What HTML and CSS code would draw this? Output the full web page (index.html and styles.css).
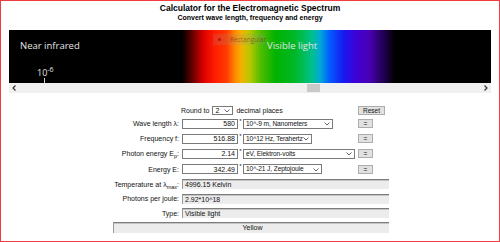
FILE: index.html
```html
<!DOCTYPE html>
<html lang="en">
<head>
  <meta charset="UTF-8" />
  <title>Electromagnetic Spectrum Calculator</title>
  <link rel="stylesheet" href="styles.css">
</head>
<body>
  <div class="page">
    <header class="head">
      <h1 class="title">Calculator for the Electromagnetic Spectrum</h1>
      <h2 class="subtitle">Convert wave length, frequency and energy</h2>
    </header>

    <div class="spectrum">
      <div class="chart">
        <div class="band"></div>
        <div class="legend"><span class="legend-dot"></span><span class="legend-text">Rectangular</span></div>
        <span class="region region-ir">Near infrared</span>
        <span class="region region-vis">Visible light</span>
        <span class="tick">10<sup>-6</sup></span>
        <span class="tick-line"></span>
      </div>
      <div class="scrollbar">
        <span class="arrow"><svg width="4" height="6" viewBox="0 0 4 6"><path d="M3.5 0.5 L1 3 L3.5 5.5" fill="none" stroke="#333" stroke-width="1.2"/></svg></span>
        <div class="track"><div class="thumb"></div></div>
        <span class="arrow"><svg width="4" height="6" viewBox="0 0 4 6"><path d="M0.5 0.5 L3 3 L0.5 5.5" fill="none" stroke="#333" stroke-width="1.2"/></svg></span>
      </div>
    </div>

    <div class="calc">
      <div class="round">
        Round to
        <span class="select select-round">2<svg class="chev" width="6" height="4" viewBox="0 0 6 4"><path d="M0.5 0.5 L3 3 L5.5 0.5" fill="none" stroke="#555" stroke-width="0.9"/></svg></span>
        decimal places
      </div>
      <span class="btn btn-reset">Reset</span>

      <span class="label">Wave length λ:</span>
      <input class="num" type="text" value="580" />
      <span class="star">*</span>
      <span class="select" style="width: 90px">10^-9 m, Nanometers<svg class="chev" width="6" height="4" viewBox="0 0 6 4"><path d="M0.5 0.5 L3 3 L5.5 0.5" fill="none" stroke="#555" stroke-width="0.9"/></svg></span>
      <span class="btn btn-eq">=</span>

      <span class="label">Frequency f:</span>
      <input class="num" type="text" value="516.88" />
      <span class="star">*</span>
      <span class="select" style="width: 69px">10^12 Hz, Terahertz<svg class="chev" width="6" height="4" viewBox="0 0 6 4"><path d="M0.5 0.5 L3 3 L5.5 0.5" fill="none" stroke="#555" stroke-width="0.9"/></svg></span>
      <span class="btn btn-eq">=</span>

      <span class="label">Photon energy E<sub>p</sub>:</span>
      <input class="num" type="text" value="2.14" />
      <span class="star">*</span>
      <span class="select" style="width: 112px">eV, Elektron-volts<svg class="chev" width="6" height="4" viewBox="0 0 6 4"><path d="M0.5 0.5 L3 3 L5.5 0.5" fill="none" stroke="#555" stroke-width="0.9"/></svg></span>
      <span class="btn btn-eq">=</span>

      <span class="label">Energy E:</span>
      <input class="num" type="text" value="342.49" />
      <span class="star">*</span>
      <span class="select" style="width: 79px">10^-21 J, Zeptojoule<svg class="chev" width="6" height="4" viewBox="0 0 6 4"><path d="M0.5 0.5 L3 3 L5.5 0.5" fill="none" stroke="#555" stroke-width="0.9"/></svg></span>
      <span class="btn btn-eq">=</span>

      <span class="label">Temperature at λ<sub>max</sub>:</span>
      <div class="out">4996.15 Kelvin</div>

      <span class="label">Photons per joule:</span>
      <div class="out">2.92*10^18</div>

      <span class="label">Type:</span>
      <div class="out">Visible light</div>

      <div class="out out-color">Yellow</div>
    </div>
  </div>
</body>
</html>
```

FILE: styles.css
```css
* {
  box-sizing: border-box;
}
body {
  margin: 0;
  font-family: 'Liberation Sans', Arial, sans-serif;
  background: #ffffff;
  color: #000000;
}
.page {
  width: 500px;
  height: 242px;
  border: 1px solid #f03c3c;
  overflow: hidden;
}
.head {
  padding-top: 2px;
  text-align: center;
}
.title {
  margin: 0;
  font-size: 8.5px;
  line-height: 11px;
  font-weight: bold;
}
.subtitle {
  margin: 0;
  font-size: 7px;
  line-height: 7px;
  font-weight: bold;
}
.spectrum {
  margin: 9px 8px 0 8px;
}
.chart {
  position: relative;
  height: 53px;
  background: #000000;
  overflow: hidden;
  font-family: 'Open Sans', sans-serif;
}
.band {
  position: absolute;
  left: 173px;
  top: 0;
  width: 213px;
  height: 100%;
  background: linear-gradient(to right,
    #000000 0%,
    #6a0000 5%,
    #d80000 10%,
    #ff1a00 15%,
    #ff3c00 21%,
    #ff8a00 25%,
    #f2b400 28%,
    #b4c800 32%,
    #50bd00 37%,
    #00b200 44%,
    #00b828 53%,
    #00c08c 61%,
    #00a8d8 65%,
    #0060ff 69%,
    #1818f0 76%,
    #4000d4 82%,
    #4a00b4 88%,
    #24005a 94%,
    #000000 100%);
}
.legend {
  position: absolute;
  left: 204px;
  top: 4px;
  width: 52px;
  height: 11px;
  background: rgba(150, 150, 150, 0.18);
  font-size: 6.5px;
  line-height: 11px;
  padding-left: 17px;
  white-space: nowrap;
}
.legend-text {
  color: rgba(110, 20, 20, 0.55);
}
.legend-dot {
  position: absolute;
  left: 5px;
  top: 4px;
  width: 3px;
  height: 3px;
  border-radius: 50%;
  background: rgba(140, 0, 0, 0.6);
}
.region {
  position: absolute;
  top: 11px;
  font-size: 9.5px;
  line-height: 10px;
  color: #e4e4e4;
  white-space: nowrap;
}
.region-ir {
  left: 11px;
}
.region-vis {
  left: 258px;
}
.tick {
  position: absolute;
  left: 28px;
  top: 38px;
  font-size: 9px;
  line-height: 10px;
  color: #e4e4e4;
}
.tick sup {
  font-size: 7px;
  vertical-align: 4px;
  line-height: 0;
}
.tick-line {
  position: absolute;
  left: 35px;
  top: 48px;
  width: 1px;
  height: 5px;
  background: #cccccc;
}
.scrollbar {
  display: flex;
  align-items: center;
  height: 10px;
  background: #f0f0f0;
}
.arrow {
  width: 10px;
  height: 10px;
  display: flex;
  align-items: center;
  justify-content: center;
}
.track {
  flex: 1;
  height: 10px;
  padding-top: 1px;
}
.thumb {
  margin-left: 288px;
  width: 13px;
  height: 8px;
  background: #c9c9c9;
}
.calc {
  display: grid;
  grid-template-columns: 69px 56px 5px 115px 31px;
  grid-template-rows: 12px 15px 15px 15px 16px 14.5px 14.5px 14.5px 14.5px;
  align-items: center;
  width: 276px;
  margin: 11px 0 0 112px;
  font-size: 7px;
  color: #111111;
}
.round {
  grid-column: 2 / 5;
  display: flex;
  align-items: center;
  gap: 3px;
  margin-left: -1px;
  white-space: nowrap;
}
.label {
  grid-column: 1;
  text-align: right;
  padding-right: 3px;
  white-space: nowrap;
}
.label sub {
  font-size: 5.5px;
  line-height: 0;
}
.num {
  width: 56px;
  height: 10px;
  margin: 0;
  padding: 0 2px;
  border: 1px solid #7a7a7a;
  background: #ffffff;
  font-family: 'Liberation Sans', Arial, sans-serif;
  font-size: 7px;
  color: #111111;
  text-align: right;
}
.star {
  text-align: center;
  font-size: 6px;
  align-self: start;
  padding-top: 2px;
}
.select {
  position: relative;
  display: block;
  height: 10px;
  padding: 0 6px 0 2px;
  border: 1px solid #7a7a7a;
  background: #ffffff;
  font-size: 6.6px;
  letter-spacing: -0.1px;
  line-height: 8px;
  white-space: nowrap;
  overflow: hidden;
}
.select-round {
  width: 21px;
  height: 9px;
  line-height: 7px;
  font-size: 7px;
}
.chev {
  position: absolute;
  right: 2px;
  top: 2.5px;
}
.btn {
  display: block;
  height: 9px;
  border: 1px solid #adadad;
  background: #e1e1e1;
  font-size: 6.5px;
  line-height: 7px;
  text-align: center;
}
.btn-eq {
  width: 15px;
}
.btn-reset {
  width: 27px;
}
.out {
  grid-column: 2 / 6;
  height: 10px;
  padding-left: 2px;
  border-top: 1px solid #7c7c7c;
  border-left: 1px solid #9a9a9a;
  background: #ececec;
  box-shadow: inset 0 1px 0 #c4c4c4;
  line-height: 9px;
}
.out-color {
  grid-column: 1 / 6;
  height: 11px;
  text-align: center;
  line-height: 10px;
}
```
